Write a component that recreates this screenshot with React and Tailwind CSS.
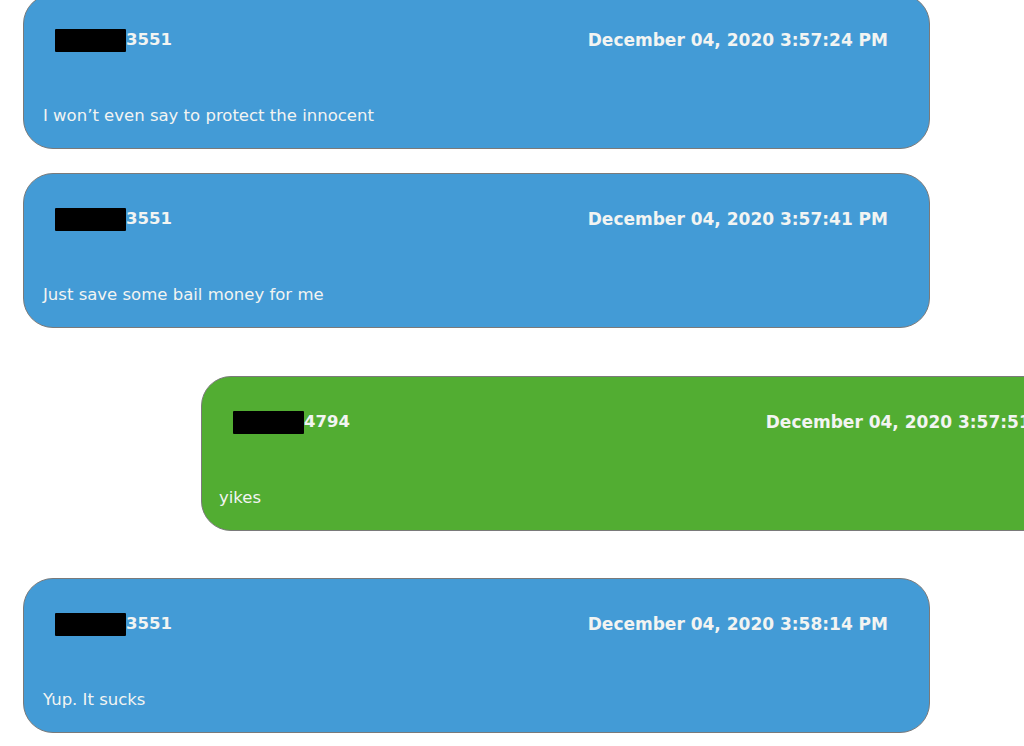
import React from "react";

function Bubble({ green, digits, time, text, className }) {
  const bg = green ? "bg-[#52ad32]" : "bg-[#439bd6]";
  return (
    <div
      className={`${bg} ${className} w-[907px] h-[155px] shrink-0 rounded-[30px] border border-[#7a7a7a] flex flex-col text-[#f2f4f2]`}
    >
      <div className="flex items-center justify-between pl-[31px] pr-[41px] mt-[33px] h-[24px]">
        <div className="flex items-center">
          <span className="inline-block w-[71px] h-[23px] bg-black rounded-[1px]" />
          <span className="font-bold text-[16.5px] leading-none" style={{ fontFamily: '"DejaVu Sans", Verdana, sans-serif' }}>
            {digits}
          </span>
        </div>
        <span className="font-bold text-[17px] leading-none" style={{ fontFamily: '"DejaVu Sans", Verdana, sans-serif' }}>
          {time}
        </span>
      </div>
      <div
        className={`${green ? "pl-[17px]" : "pl-[19px]"} mt-[56px] text-[16.5px] leading-none`}
        style={{ fontFamily: '"DejaVu Sans", Tahoma, sans-serif' }}
      >
        {text}
      </div>
    </div>
  );
}

export default function App() {
  return (
    <div className="w-[1024px] h-[746px] overflow-hidden bg-white">
      <div className="flex flex-col">
        <Bubble
          className="ml-[23px] -mt-[6px]"
          digits="3551"
          time="December 04, 2020 3:57:24 PM"
          text="I won’t even say to protect the innocent"
        />
        <Bubble
          className="ml-[23px] mt-[24px]"
          digits="3551"
          time="December 04, 2020 3:57:41 PM"
          text="Just save some bail money for me"
        />
        <Bubble
          green
          className="ml-[201px] mt-[48px]"
          digits="4794"
          time="December 04, 2020 3:57:51 PM"
          text="yikes"
        />
        <Bubble
          className="ml-[23px] mt-[47px]"
          digits="3551"
          time="December 04, 2020 3:58:14 PM"
          text="Yup. It sucks"
        />
      </div>
    </div>
  );
}
